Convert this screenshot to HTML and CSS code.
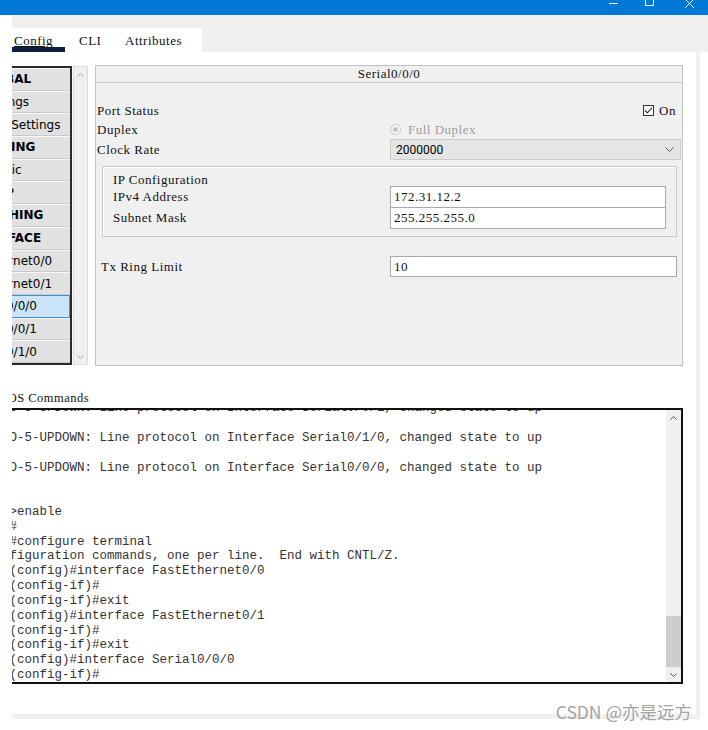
FILE: index.html
```html
<!DOCTYPE html>
<html lang="en">
<head>
    <meta charset="UTF-8">
    <meta name="viewport" content="width=device-width, initial-scale=1.0">
    <title>Router - Config</title>
    <link rel="stylesheet" href="styles.css">
</head>
<body>

    <div class="titlebar">
        <svg class="winctl" width="108" height="15" viewBox="0 0 108 15">
            <path d="M9 3.5h9" stroke="#fff" stroke-width="1" fill="none"/>
            <rect x="45.5" y="-4.5" width="8" height="10" stroke="#fff" stroke-width="1" fill="none"/>
            <path d="M85 -1l9 9M94 -1l-9 9" stroke="#fff" stroke-width="1" fill="none"/>
        </svg>
    </div>

    <div class="window">
        <div class="tabbar">
            <div class="tabs">
                <span class="tab active">Config</span>
                <span class="tab cli">CLI</span>
                <span class="tab">Attributes</span>
            </div>
        </div>

        <div class="content">
            <div class="config-row">
                <div class="nav">
                    <div class="nav-list">
                        <div class="nav-item head">GLOBAL</div>
                        <div class="nav-item">Settings</div>
                        <div class="nav-item">Algorithm Settings</div>
                        <div class="nav-item head">ROUTING</div>
                        <div class="nav-item">Static</div>
                        <div class="nav-item">RIP</div>
                        <div class="nav-item head">SWITCHING</div>
                        <div class="nav-item head">INTERFACE</div>
                        <div class="nav-item">FastEthernet0/0</div>
                        <div class="nav-item">FastEthernet0/1</div>
                        <div class="nav-item selected">Serial0/0/0</div>
                        <div class="nav-item">Serial0/0/1</div>
                        <div class="nav-item">Serial0/1/0</div>
                    </div>
                    <div class="vscroll nav-bar">
                        <div class="arrow"><svg width="7" height="4" viewBox="0 0 7 4"><path d="M0.5 3.5l3-3 3 3" stroke="#a6a6a6" fill="none"/></svg></div>
                        <div class="track"></div>
                        <div class="arrow"><svg width="7" height="4" viewBox="0 0 7 4"><path d="M0.5 0.5l3 3 3-3" stroke="#a6a6a6" fill="none"/></svg></div>
                    </div>
                </div>

                <div class="panel">
                    <div class="panel-title">Serial0/0/0</div>
                    <div class="panel-body">
                        <div class="row status">
                            <span class="label">Port Status</span>
                            <span class="check-wrap">
                                <span class="checkbox"><svg width="9" height="9" viewBox="0 0 9 9"><path d="M1 4.5l2.3 2.3L8 1.8" stroke="#222" stroke-width="1.1" fill="none"/></svg></span>
                                On
                            </span>
                        </div>
                        <div class="row duplex">
                            <span class="label">Duplex</span>
                            <span class="radio"><span class="dot"></span></span>
                            <span class="disabled">Full Duplex</span>
                        </div>
                        <div class="row clock">
                            <span class="label">Clock Rate</span>
                            <div class="select">
                                <span>2000000</span>
                                <svg width="9" height="5" viewBox="0 0 9 5"><path d="M0.5 0.5l4 4 4-4" stroke="#555" fill="none"/></svg>
                            </div>
                        </div>

                        <div class="group">
                            <div class="group-title">IP Configuration</div>
                            <div class="row ip">
                                <span class="label">IPv4 Address</span>
                                <div class="field">172.31.12.2</div>
                            </div>
                            <div class="row ip second">
                                <span class="label">Subnet Mask</span>
                                <div class="field">255.255.255.0</div>
                            </div>
                        </div>

                        <div class="row tx">
                            <span class="label">Tx Ring Limit</span>
                            <div class="field">10</div>
                        </div>
                    </div>
                </div>
            </div>

            <div class="ios-label">IOS Commands</div>
            <div class="console">
                <div class="console-text">
<pre>O-5-UPDOWN: Line protocol on Interface Serial0/0/1, changed state to up

O-5-UPDOWN: Line protocol on Interface Serial0/1/0, changed state to up

O-5-UPDOWN: Line protocol on Interface Serial0/0/0, changed state to up


>enable
#
#configure terminal
figuration commands, one per line.  End with CNTL/Z.
(config)#interface FastEthernet0/0
(config-if)#
(config-if)#exit
(config)#interface FastEthernet0/1
(config-if)#
(config-if)#exit
(config)#interface Serial0/0/0
(config-if)#</pre>
                </div>
                <div class="vscroll console-bar">
                    <div class="arrow"><svg width="7" height="4" viewBox="0 0 7 4"><path d="M0.5 3.5l3-3 3 3" stroke="#555" fill="none"/></svg></div>
                    <div class="track"><div class="thumb"></div></div>
                    <div class="arrow"><svg width="7" height="4" viewBox="0 0 7 4"><path d="M0.5 0.5l3 3 3-3" stroke="#555" fill="none"/></svg></div>
                </div>
            </div>
        </div>
    </div>

    <div class="watermark">CSDN @亦是远方</div>

</body>
</html>
```

FILE: styles.css
```css
* {
    box-sizing: border-box;
}

body {
    margin: 0;
    width: 708px;
    height: 730px;
    overflow: hidden;
    position: relative;
    background: #fff;
    font-family: "Liberation Serif", serif;
    font-size: 13px;
    letter-spacing: 0.5px;
    color: #111;
}

.titlebar {
    height: 15px;
    background: #0078d7;
    display: flex;
    justify-content: flex-end;
}

.window {
    margin-left: 12px;
    width: 688px;
    height: 704px;
    padding-right: 4px;
    background: #f0f0f0;
}

.tabbar {
    height: 37px;
    margin-right: -12px;
    padding-top: 13px;
    background: #f0f0f0;
}

.tabs {
    display: flex;
    width: 190px;
    height: 24px;
    background: #fff;
}

.tab {
    height: 24px;
    padding-top: 6px;
    line-height: 14px;
}

.tab.active {
    width: 53px;
    padding-left: 2px;
    border-bottom: 5px solid #0d1f3c;
    text-decoration: underline;
}

.tab.cli {
    width: 60px;
    padding-left: 14px;
}

.content {
    height: 662px;
    background: #fff;
    overflow: hidden;
    position: relative;
}

.config-row {
    display: flex;
    align-items: flex-start;
    margin-top: 13px;
    height: 301px;
}

/* left list */
.nav {
    display: flex;
    gap: 1px;
    margin-left: -75px;
    margin-top: 1px;
}

.nav-list {
    width: 135px;
    height: 299px;
    border: 2px solid #2a2a2a;
    display: flex;
    flex-direction: column;
    background: #f0f0f0;
}

.nav-item {
    flex: 1;
    display: flex;
    align-items: center;
    justify-content: center;
    white-space: nowrap;
    font-family: "DejaVu Sans", sans-serif;
    font-size: 12px;
    letter-spacing: 0;
    color: #000;
    background: #e1e1e1;
    border-top: 1px solid #f8f8f8;
    border-bottom: 1px solid #c9c9c9;
}

.nav-item.head {
    font-weight: bold;
}

.nav-item.selected {
    background: #cce4f7;
    border: 1px solid #3d8ed6;
}

.vscroll {
    width: 15px;
    display: flex;
    flex-direction: column;
    background: #f0f0f0;
}

.vscroll .arrow {
    height: 15px;
    display: flex;
    align-items: center;
    justify-content: center;
}

.vscroll .track {
    flex: 1;
    display: flex;
    flex-direction: column;
    justify-content: flex-end;
}

.nav-bar {
    height: 299px;
    border: 1px solid #dcdcdc;
}

/* interface panel */
.panel {
    margin-left: 7px;
    width: 588px;
    height: 301px;
    border: 1px solid #c3c3c3;
    background: #f0f0f0;
}

.panel-title {
    height: 17px;
    line-height: 15px;
    text-align: center;
    border-bottom: 1px solid #c8c8c8;
}

.panel-body {
    padding-top: 18px;
}

.row {
    display: flex;
    align-items: center;
}

.label {
    flex: none;
    width: 293px;
    white-space: nowrap;
}

.row.status {
    height: 19px;
    padding-left: 1px;
}

.check-wrap {
    margin-left: auto;
    margin-right: 6px;
    display: flex;
    align-items: center;
    gap: 5px;
}

.checkbox {
    width: 11px;
    height: 11px;
    border: 1px solid #333;
    background: #fff;
    display: flex;
    align-items: center;
    justify-content: center;
}

.row.duplex {
    height: 19px;
    padding-left: 1px;
}

.radio {
    width: 11px;
    height: 11px;
    border: 1px solid #c4c4c4;
    border-radius: 50%;
    background: #f6f6f6;
    display: flex;
    align-items: center;
    justify-content: center;
    margin-right: 7px;
}

.radio .dot {
    width: 5px;
    height: 5px;
    border-radius: 50%;
    background: #c4c4c4;
}

.disabled {
    color: #9d9d9d;
}

.row.clock {
    height: 21px;
    padding-left: 1px;
    padding-right: 1px;
}

.select {
    flex: 1;
    height: 21px;
    display: flex;
    align-items: center;
    justify-content: space-between;
    padding: 0 6px 0 5px;
    background: #e5e5e5;
    border: 1px solid #cccccc;
    font-family: Roboto, sans-serif;
    font-size: 12px;
    letter-spacing: 0;
    color: #000;
}

.group {
    margin: 6px 5px 0 6px;
    padding: 6px 10px 7px 10px;
    border: 1px solid #c8c8c8;
    box-shadow: inset 1px 1px 0 #fff;
}

.group-title {
    height: 13px;
    line-height: 13px;
}

.row.ip .label {
    width: 277px;
}

.field {
    flex: 1;
    height: 22px;
    line-height: 20px;
    padding-left: 3px;
    background: #fff;
    border: 1px solid #a9a9a9;
    white-space: nowrap;
}

.row.ip.second {
    margin-top: -1px;
}

.row.tx {
    margin-top: 19px;
    padding: 0 5px;
}

.row.tx .label {
    width: 289px;
}

.row.tx .field {
    height: 21px;
    line-height: 19px;
}

/* console */
.ios-label {
    margin-top: 25px;
    margin-left: -9px;
    height: 14px;
    line-height: 14px;
    font-size: 12.5px;
}

.console {
    margin-top: 3px;
    margin-left: -20px;
    width: 691px;
    height: 276px;
    border: 2px solid #111;
    background: #fff;
    display: flex;
    overflow: hidden;
}

.console-text {
    flex: 1;
    overflow: hidden;
}

.console-text pre {
    margin: -8.8px 0 0 0;
    padding-left: 15.5px;
    font-family: "Liberation Mono", monospace;
    font-size: 12.5px;
    line-height: 14.83px;
    letter-spacing: 0;
    color: #333;
}

.console-bar {
    height: 100%;
}

.console-bar .thumb {
    height: 51px;
    background: #cdcdcd;
}

.watermark {
    position: absolute;
    right: 16px;
    top: 699px;
    font-family: "Noto Sans CJK SC", sans-serif;
    font-size: 17.5px;
    letter-spacing: 0;
    color: #a3a3a3;
}
```
